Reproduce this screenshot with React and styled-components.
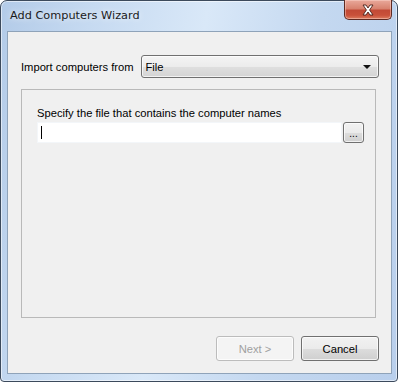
import React from 'react'
import styled, { createGlobalStyle } from 'styled-components'

const GlobalStyle = createGlobalStyle`
    html, body {
        margin: 0;
        padding: 0;
        background: #ffffff;
    }
    body {
        font-family: 'Liberation Sans', Arial, sans-serif;
        font-size: 11.2px;
        color: #000;
    }
`

const Frame = styled.div`
    box-sizing: border-box;
    width: 398px;
    height: 382px;
    display: flex;
    flex-direction: column;
    border: 1px solid #3c4a5c;
    border-radius: 7px 7px 4px 4px;
    padding: 0 5px 7px 6px;
    background: linear-gradient(
        100deg,
        #b3cbe8 0%,
        #c6daf1 20%,
        #d9e8f8 45%,
        #c4d8f0 70%,
        #b9cfec 100%
    );
    box-shadow: inset 0 0 0 1px rgba(255, 255, 255, 0.55);
`

const TitleBar = styled.div`
    height: 30px;
    display: flex;
    align-items: flex-start;
    justify-content: space-between;
`

const Title = styled.span`
    margin: 8px 0 0 3px;
    font-family: 'DejaVu Sans', 'Liberation Sans', sans-serif;
    font-size: 11.3px;
    color: #1a1a1a;
    text-shadow: 0 0 6px rgba(255, 255, 255, 0.9);
`

const CloseButton = styled.div`
    box-sizing: border-box;
    width: 48px;
    height: 20px;
    margin: -1px 0 0 0;
    display: flex;
    align-items: center;
    justify-content: center;
    border: 1px solid #5e2a22;
    border-top: none;
    border-radius: 0 0 5px 5px;
    background: linear-gradient(
        to bottom,
        #e9a99b 0%,
        #d8826f 45%,
        #c24a36 55%,
        #c9513a 80%,
        #dc7c5e 100%
    );
    box-shadow: inset 0 0 0 1px rgba(255, 220, 210, 0.45);
`

const Client = styled.div`
    flex: 1;
    display: flex;
    flex-direction: column;
    border: 1px solid #8fa3b9;
    background: #f0f0f0;
    padding: 23px 12px 12px 13px;
`

const SourceRow = styled.div`
    display: flex;
    align-items: center;
    gap: 7px;
`

const Label = styled.span`
    white-space: nowrap;
`

const Combo = styled.div`
    box-sizing: border-box;
    flex: 1;
    height: 23px;
    display: flex;
    align-items: center;
    justify-content: space-between;
    padding: 0 7px 0 4px;
    border: 1px solid #707070;
    border-radius: 3px;
    background: linear-gradient(
        to bottom,
        #f4f4f4 0%,
        #ececec 50%,
        #dfdfdf 51%,
        #d4d4d4 100%
    );
    box-shadow: inset 0 0 0 1px rgba(255, 255, 255, 0.7);
`

const Arrow = styled.span`
    width: 0;
    height: 0;
    border-left: 4px solid transparent;
    border-right: 4px solid transparent;
    border-top: 4px solid #111;
`

const Group = styled.div`
    box-sizing: border-box;
    height: 229px;
    margin: 11px 3px 0 0;
    border: 1px solid #b9b9b9;
    padding: 17px 11px 0 15px;
    display: flex;
    flex-direction: column;
    gap: 3px;
`

const FileRow = styled.div`
    display: flex;
    gap: 1px;
    height: 21px;
`

const Field = styled.div`
    box-sizing: border-box;
    flex: 1;
    display: flex;
    align-items: center;
    padding-left: 3px;
    background: #ffffff;
    border: 1px solid #f3f6f9;
`

const Caret = styled.span`
    width: 1px;
    height: 13px;
    background: #000;
`

const BrowseButton = styled.div`
    box-sizing: border-box;
    width: 21px;
    display: flex;
    align-items: flex-end;
    justify-content: center;
    padding-bottom: 4px;
    font-size: 10px;
    line-height: 8px;
    border: 1px solid #707070;
    border-radius: 3px;
    background: linear-gradient(
        to bottom,
        #f2f2f2 0%,
        #ebebeb 50%,
        #dddddd 51%,
        #cfcfcf 100%
    );
    box-shadow: inset 0 0 0 1px rgba(255, 255, 255, 0.7);
`

const Footer = styled.div`
    margin-top: auto;
    display: flex;
    justify-content: flex-end;
    gap: 7px;
`

const Button = styled.div`
    box-sizing: border-box;
    width: 78px;
    height: 25px;
    display: flex;
    align-items: center;
    justify-content: center;
    border-radius: 3px;
    border: 1px solid ${p => (p.disabled ? '#bcbcbc' : '#707070')};
    color: ${p => (p.disabled ? '#a0a0a0' : '#000')};
    background: ${p =>
        p.disabled
            ? '#f4f4f4'
            : 'linear-gradient(to bottom, #f2f2f2 0%, #ebebeb 50%, #dddddd 51%, #cfcfcf 100%)'};
    box-shadow: inset 0 0 0 1px rgba(255, 255, 255, 0.7);
`

function CloseIcon() {
    return (
        <svg width='14' height='12' viewBox='0 0 14 12'>
            <path
                d='M2 1 L5 1 L7 4 L9 1 L12 1 L8.6 6 L12 11 L9 11 L7 8 L5 11 L2 11 L5.4 6 Z'
                fill='#ffffff'
                stroke='#4a2018'
                strokeWidth='0.9'
                strokeLinejoin='round'
            />
        </svg>
    )
}

function App() {
    return (
        <>
            <GlobalStyle />
            <Frame>
                <TitleBar>
                    <Title>Add Computers Wizard</Title>
                    <CloseButton>
                        <CloseIcon />
                    </CloseButton>
                </TitleBar>
                <Client>
                    <SourceRow>
                        <Label>Import computers from</Label>
                        <Combo>
                            <span>File</span>
                            <Arrow />
                        </Combo>
                    </SourceRow>

                    <Group>
                        <Label>Specify the file that contains the computer names</Label>
                        <FileRow>
                            <Field>
                                <Caret />
                            </Field>
                            <BrowseButton>...</BrowseButton>
                        </FileRow>
                    </Group>

                    <Footer>
                        <Button disabled>Next &gt;</Button>
                        <Button>Cancel</Button>
                    </Footer>
                </Client>
            </Frame>
        </>
    )
}

export default App
